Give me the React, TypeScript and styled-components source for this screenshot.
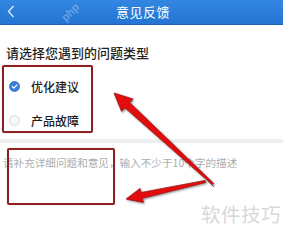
import * as React from 'react';
import styled, { createGlobalStyle } from 'styled-components';

const GlobalStyle = createGlobalStyle`
  html, body {
    margin: 0;
    padding: 0;
    background: #ffffff;
  }
  body {
    font-family: "Noto Sans CJK SC", "Noto Sans", sans-serif;
  }
`;

const Page = styled.div`
  position: relative;
  width: 283px;
  height: 234px;
  overflow: hidden;
  background: #ffffff;
`;

const Header = styled.header`
  position: relative;
  height: 24px;
  display: flex;
  align-items: center;
  justify-content: center;
  background: linear-gradient(180deg, #3386e2 0%, #2475d3 100%);
  border-bottom: 1px solid #1d63b8;
  color: #ffffff;
`;

const BackButton = styled.span`
  position: absolute;
  left: 7px;
  top: 5px;
  display: flex;
`;

const Title = styled.h1`
  margin: 0;
  font-size: 13px;
  font-weight: 400;
  letter-spacing: 0.5px;
  line-height: 16px;
  margin-left: 3px;
`;

const HeaderMark = styled.span`
  position: absolute;
  left: 60px;
  top: 6px;
  font-family: "Liberation Sans", sans-serif;
  font-size: 11px;
  line-height: 12px;
  font-weight: 700;
  color: rgba(255, 255, 255, 0.3);
  transform: rotate(-45deg);
`;

const Section = styled.section`
  padding: 20px 0 0 6px;
`;

const Question = styled.h2`
  margin: 0;
  font-size: 13px;
  font-weight: 500;
  line-height: 16px;
  color: #1e1e1e;
`;

const OptionList = styled.div`
  display: flex;
  flex-direction: column;
  margin-top: 8px;
  margin-left: 3px;
`;

const OptionRow = styled.label`
  height: 34px;
  display: flex;
  align-items: center;
  gap: 11px;
  font-size: 12px;
  font-weight: 500;
  color: #1e1e1e;
`;

const Radio = styled.span<{ $checked: boolean }>`
  width: 11px;
  height: 11px;
  border-radius: 50%;
  box-sizing: border-box;
  display: flex;
  align-items: center;
  justify-content: center;
  background: ${({ $checked }) => ($checked ? '#3a7fd6' : '#f7f7f7')};
  border: 1px solid ${({ $checked }) => ($checked ? '#3a7fd6' : '#d8d8d8')};
`;

const Divider = styled.div`
  height: 4px;
  margin-top: 2px;
  background: #efefef;
`;

const Feedback = styled.div`
  padding: 13px 0 0 3px;
  height: 60px;
  font-size: 10.6px;
  line-height: 13px;
  color: #adadad;
  white-space: nowrap;
`;

const Highlight = styled.div<{ $x: number; $y: number; $w: number; $h: number }>`
  position: absolute;
  left: ${({ $x }) => $x}px;
  top: ${({ $y }) => $y}px;
  width: ${({ $w }) => $w}px;
  height: ${({ $h }) => $h}px;
  box-sizing: border-box;
  border: 2px solid #8e1f1f;
  border-radius: 2px;
  box-shadow: 0 0 1px rgba(140, 20, 20, 0.5);
`;

const Arrows = styled.svg`
  position: absolute;
  left: 0;
  top: 0;
  pointer-events: none;
`;

const Watermark = styled.span`
  position: absolute;
  right: 2px;
  bottom: 6px;
  font-size: 19.5px;
  letter-spacing: 0.5px;
  color: #d8d8d8;
`;

const Check = () => (
  <svg width="7" height="7" viewBox="0 0 7 7">
    <path d="M1.2 3.6 L2.9 5.1 L5.9 1.9" fill="none" stroke="#ffffff" strokeWidth="1.3" strokeLinecap="round" strokeLinejoin="round" />
  </svg>
);

const options = [
  { label: '优化建议', checked: true },
  { label: '产品故障', checked: false },
];

export default function App() {
  return (
    <Page>
      <GlobalStyle />
      <Header>
        <BackButton>
          <svg width="8" height="13" viewBox="0 0 8 13">
            <path d="M6.5 1 L1.5 6.5 L6.5 12" fill="none" stroke="#dce9fb" strokeWidth="1.4" />
          </svg>
        </BackButton>
        <HeaderMark>php</HeaderMark>
        <Title>意见反馈</Title>
      </Header>
      <Section>
        <Question>请选择您遇到的问题类型</Question>
        <OptionList>
          {options.map(({ label, checked }) => (
            <OptionRow key={label}>
              <Radio $checked={checked}>{checked && <Check />}</Radio>
              {label}
            </OptionRow>
          ))}
        </OptionList>
      </Section>
      <Divider />
      <Feedback>请补充详细问题和意见，输入不少于10个字的描述</Feedback>

      <Highlight $x={2} $y={65} $w={91} $h={68} />
      <Highlight $x={7} $y={148} $w={108} $h={57} />

      <Arrows width="283" height="234" viewBox="0 0 283 234">
        <defs>
          <filter id="glow" x="-20%" y="-20%" width="140%" height="140%">
            <feGaussianBlur in="SourceAlpha" stdDeviation="1" />
            <feOffset dx="0.5" dy="0.5" />
            <feComponentTransfer>
              <feFuncA type="linear" slope="0.5" />
            </feComponentTransfer>
            <feMerge>
              <feMergeNode />
              <feMergeNode in="SourceGraphic" />
            </feMerge>
          </filter>
        </defs>
        <g filter="url(#glow)" fill="#e3100f" stroke="#8f0808" strokeWidth="0.7" strokeLinejoin="round">
          <polygon points="114,93 133,99 129.7,102.6 213.8,183.6 212.4,184.8 124.9,107.8 121.6,111.4" />
          <polygon points="126,199 140,188.4 141,192.5 205,180.4 205.6,182.4 142.3,198.3 143.3,202.4" />
        </g>
        <line x1="206" y1="179" x2="214" y2="187" stroke="#555555" strokeWidth="0.8" />
      </Arrows>

      <Watermark>软件技巧</Watermark>
    </Page>
  );
}
